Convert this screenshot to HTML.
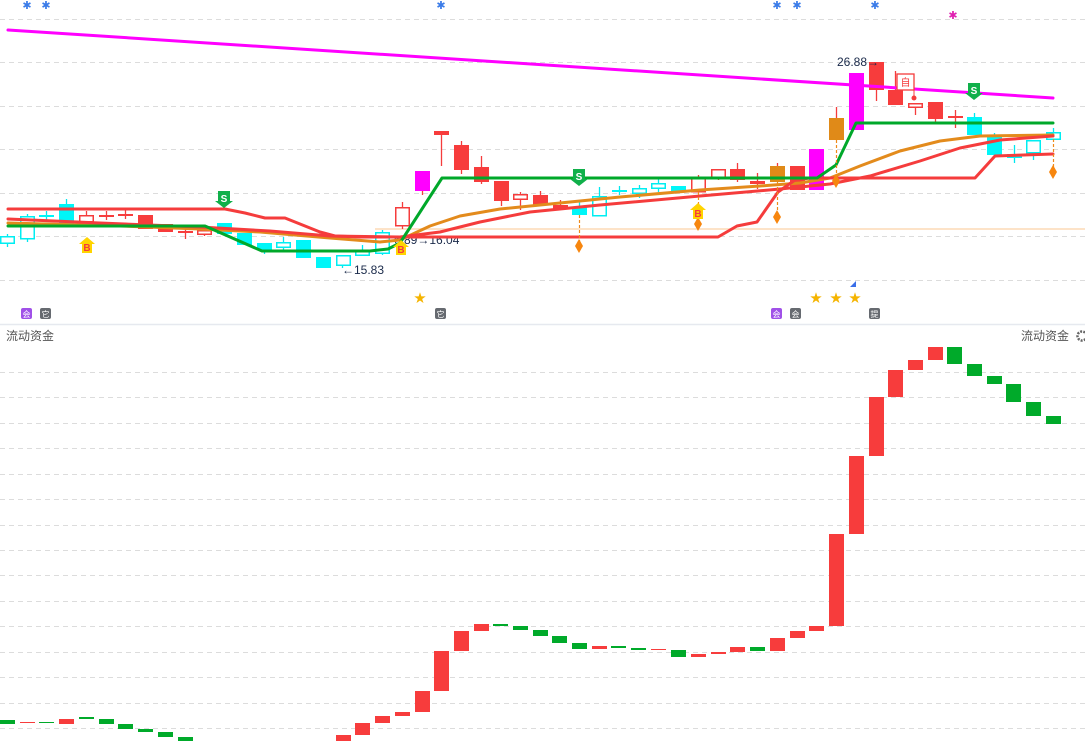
<!DOCTYPE html>
<html><head><meta charset="utf-8"><style>
html,body{margin:0;padding:0;background:#fff;width:1085px;height:741px;overflow:hidden}
svg{display:block}
text{font-family:"Liberation Sans","Noto Sans CJK SC",sans-serif}
</style></head><body>
<svg width="1085" height="741" viewBox="0 0 1085 741" xmlns="http://www.w3.org/2000/svg">
<g stroke="#dcdcdc" stroke-width="1" stroke-dasharray="5,4">
<line x1="0" y1="19.5" x2="1085" y2="19.5"/><line x1="0" y1="62.5" x2="1085" y2="62.5"/><line x1="0" y1="106.5" x2="1085" y2="106.5"/><line x1="0" y1="149.5" x2="1085" y2="149.5"/><line x1="0" y1="193.5" x2="1085" y2="193.5"/><line x1="0" y1="236.5" x2="1085" y2="236.5"/><line x1="0" y1="280.5" x2="1085" y2="280.5"/>
<line x1="0" y1="372.5" x2="1085" y2="372.5"/><line x1="0" y1="397.5" x2="1085" y2="397.5"/><line x1="0" y1="423.5" x2="1085" y2="423.5"/><line x1="0" y1="448.5" x2="1085" y2="448.5"/><line x1="0" y1="474.5" x2="1085" y2="474.5"/><line x1="0" y1="499.5" x2="1085" y2="499.5"/><line x1="0" y1="525.5" x2="1085" y2="525.5"/><line x1="0" y1="550.5" x2="1085" y2="550.5"/><line x1="0" y1="575.5" x2="1085" y2="575.5"/><line x1="0" y1="601.5" x2="1085" y2="601.5"/><line x1="0" y1="626.5" x2="1085" y2="626.5"/><line x1="0" y1="652.5" x2="1085" y2="652.5"/><line x1="0" y1="677.5" x2="1085" y2="677.5"/><line x1="0" y1="703.5" x2="1085" y2="703.5"/><line x1="0" y1="728.5" x2="1085" y2="728.5"/>
</g>
<line x1="0" y1="324.5" x2="1085" y2="324.5" stroke="#e6e9ef" stroke-width="1.5"/>
<line x1="375" y1="229" x2="1085" y2="229" stroke="#fde3c8" stroke-width="2"/>
<text x="394" y="244" font-size="12" fill="#1a2a4a">6.89→16.04</text>

<!-- wicks -->
<g stroke-width="1.3">
<g stroke="#00e8f0">
<line x1="7.5" y1="234" x2="7.5" y2="247"/><line x1="27.5" y1="214" x2="27.5" y2="242"/><line x1="46.5" y1="211" x2="46.5" y2="221"/><line x1="66.5" y1="199" x2="66.5" y2="225"/>
<line x1="264.5" y1="243" x2="264.5" y2="254"/><line x1="283.5" y1="237" x2="283.5" y2="250"/><line x1="342.5" y1="255" x2="342.5" y2="268"/><line x1="362.5" y1="245" x2="362.5" y2="256"/><line x1="382.5" y1="230" x2="382.5" y2="255"/>
<line x1="579.5" y1="200" x2="579.5" y2="215"/><line x1="599.5" y1="187" x2="599.5" y2="216"/><line x1="619.5" y1="186" x2="619.5" y2="195"/><line x1="639.5" y1="185" x2="639.5" y2="198"/><line x1="658.5" y1="178" x2="658.5" y2="192"/>
<line x1="974.5" y1="113" x2="974.5" y2="135"/><line x1="994.5" y1="133" x2="994.5" y2="155"/><line x1="1014.5" y1="145" x2="1014.5" y2="163"/><line x1="1033.5" y1="140" x2="1033.5" y2="160"/><line x1="1053.5" y1="128" x2="1053.5" y2="139"/>
</g>
<g stroke="#f53c3c">
<line x1="86.5" y1="211" x2="86.5" y2="225"/><line x1="106.5" y1="211" x2="106.5" y2="220"/><line x1="125.5" y1="210" x2="125.5" y2="219"/><line x1="185.5" y1="228" x2="185.5" y2="239"/><line x1="204.5" y1="227" x2="204.5" y2="236"/>
<line x1="402.5" y1="202" x2="402.5" y2="229"/><line x1="441.5" y1="131" x2="441.5" y2="166"/><line x1="461.5" y1="141" x2="461.5" y2="174"/><line x1="481.5" y1="156" x2="481.5" y2="184"/><line x1="501.5" y1="181" x2="501.5" y2="206"/><line x1="520.5" y1="192" x2="520.5" y2="210"/><line x1="540.5" y1="191" x2="540.5" y2="205"/><line x1="560.5" y1="200" x2="560.5" y2="209"/>
<line x1="698.5" y1="175" x2="698.5" y2="192"/><line x1="718.5" y1="169" x2="718.5" y2="180"/><line x1="737.5" y1="163" x2="737.5" y2="182"/><line x1="757.5" y1="173" x2="757.5" y2="189"/><line x1="777.5" y1="163" x2="777.5" y2="182"/>
<line x1="876.5" y1="62" x2="876.5" y2="101"/><line x1="895.5" y1="71" x2="895.5" y2="105"/><line x1="915.5" y1="103" x2="915.5" y2="115"/><line x1="935.5" y1="102" x2="935.5" y2="122"/><line x1="955.5" y1="110" x2="955.5" y2="128"/>
<line x1="836.5" y1="107" x2="836.5" y2="140"/><line x1="422.5" y1="171" x2="422.5" y2="195"/>
</g>
</g>
<!-- cyan candles -->
<g fill="#00f6f8">
<rect x="59" y="204" width="15" height="21"/><rect x="217" y="223" width="15" height="11"/><rect x="237" y="233" width="15" height="12"/><rect x="257" y="243" width="15" height="7"/><rect x="296" y="240" width="15" height="18"/><rect x="316" y="257" width="15" height="11"/>
<rect x="39" y="215" width="15" height="2"/><rect x="612" y="190" width="15" height="2"/>
<rect x="572" y="207" width="15" height="8"/><rect x="671" y="186" width="15" height="6"/>
<rect x="967" y="117" width="15" height="18"/><rect x="987" y="135" width="15" height="20"/><rect x="1007" y="154" width="15" height="4"/>
</g>
<g fill="#fff" stroke="#00eef2" stroke-width="1.5">
<rect x="0.75" y="236.75" width="13.5" height="6.5"/><rect x="20.75" y="216.75" width="13.5" height="22"/><rect x="276.75" y="242.75" width="13.5" height="4.5"/><rect x="336.75" y="255.75" width="13.5" height="9.5"/><rect x="355.75" y="250.75" width="13.5" height="4.5"/><rect x="375.75" y="232.75" width="13.5" height="20.5"/>
<rect x="592.75" y="196.75" width="13.5" height="19"/><rect x="632.75" y="188.75" width="13.5" height="4.5"/><rect x="651.75" y="183.75" width="13.5" height="4.5"/>
<rect x="1026.75" y="140.75" width="13.5" height="12"/><rect x="1046.75" y="132.75" width="13.5" height="6.5"/>
</g>
<!-- red candles -->
<g fill="#f73c3c">
<rect x="138" y="215" width="15" height="14"/><rect x="158" y="224" width="15" height="8"/><rect x="99" y="215" width="15" height="2"/><rect x="118" y="214" width="15" height="2"/><rect x="178" y="231" width="15" height="2"/>
<rect x="434" y="131" width="15" height="4"/><rect x="454" y="145" width="15" height="25"/><rect x="474" y="167" width="15" height="15"/><rect x="494" y="181" width="15" height="20"/><rect x="533" y="195" width="15" height="10"/><rect x="553" y="205" width="15" height="4"/>
<rect x="730" y="169" width="15" height="11"/><rect x="750" y="181" width="15" height="3"/><rect x="790" y="166" width="15" height="24"/>
<rect x="869" y="62" width="15" height="28"/><rect x="888" y="90" width="15" height="15"/><rect x="928" y="102" width="15" height="17"/><rect x="948" y="116" width="15" height="2"/>
</g>
<g fill="#fff" stroke="#f53c3c" stroke-width="1.5">
<rect x="79.75" y="215.75" width="13.5" height="6"/><rect x="197.75" y="230.75" width="13.5" height="3.5"/><rect x="395.75" y="207.75" width="13.5" height="18"/><rect x="513.75" y="194.75" width="13.5" height="4.5"/><rect x="691.75" y="177.75" width="13.5" height="14"/><rect x="711.75" y="169.75" width="13.5" height="8"/><rect x="908.75" y="103.75" width="13.5" height="3.5"/>
</g>
<g fill="#ff00ff"><rect x="415" y="171" width="15" height="20"/><rect x="809" y="149" width="15" height="41"/><rect x="849" y="73" width="15" height="57"/></g>
<g fill="#e08a18"><rect x="770" y="166" width="15" height="16"/><rect x="829" y="118" width="15" height="22"/></g>

<!-- lines -->
<g fill="none" stroke-linejoin="round" stroke-linecap="round">
<line x1="8" y1="30" x2="1053" y2="98" stroke="#ff00ff" stroke-width="3"/>
<polyline stroke="#e38b1c" stroke-width="3" points="8,223 120,226 200,229 260,232 330,238 380,242 400,240 430,226 460,216 500,209 560,203 620,197 700,190 760,186 800,183 830,178 860,166 900,151 940,141 980,136 1053,135"/>
<polyline stroke="#f53c3c" stroke-width="3" points="8,219 100,223 200,227 270,231 330,236 400,237 440,232 480,222 530,212 600,205 700,196 780,189 830,184 870,176 920,161 960,148 1000,140 1053,136"/>
<polyline stroke="#f53c3c" stroke-width="3" points="8,209 225,209 245,213 265,218 285,218 320,232 335,236 360,237 718,237 737,226 757,222 778,192 795,180 810,178 975,178 995,156 1053,154"/>
<polyline stroke="#00a82a" stroke-width="3" points="8,226 205,226 262,251 370,251 388,249 400,243 442,178 817,178 836,165 856,123 1053,123"/>
</g>

<!-- dashed orange to diamonds -->
<g stroke="#ef8a1a" stroke-width="1.2" stroke-dasharray="3,2">
<line x1="579.5" y1="215" x2="579.5" y2="242"/><line x1="777.5" y1="182" x2="777.5" y2="213"/><line x1="836.5" y1="140" x2="836.5" y2="177"/><line x1="1053.5" y1="139" x2="1053.5" y2="168"/><line x1="698.5" y1="192" x2="698.5" y2="218"/>
</g>
<g fill="#f7860e">
<polygon points="579,239 583,246 579,253 575,246"/><polygon points="698,217 702,224 698,231 694,224"/><polygon points="777,210 781,217 777,224 773,217"/><polygon points="836,174 840,181 836,188 832,181"/><polygon points="1053,165 1057,172 1053,179 1049,172"/>
</g>

<!-- S markers -->
<g>
<path d="M218,191h12v10h3l-9,7l-9,-7h3z" fill="#10b04a"/><text x="224" y="202" font-size="10" font-weight="bold" fill="#fff" text-anchor="middle">S</text>
<path d="M573,169h12v10h3l-9,7l-9,-7h3z" fill="#10b04a"/><text x="579" y="180" font-size="10" font-weight="bold" fill="#fff" text-anchor="middle">S</text>
<path d="M968,83h12v10h3l-9,7l-9,-7h3z" fill="#10b04a"/><text x="974" y="94" font-size="10" font-weight="bold" fill="#fff" text-anchor="middle">S</text>
</g>
<!-- B markers -->
<g>
<path d="M87,237l8,7h-3v9h-10v-9h-3z" fill="#ffd400"/><text x="87" y="251" font-size="10" font-weight="bold" fill="#f53c3c" text-anchor="middle">B</text>
<path d="M401,240l8,7h-3v8h-10v-8h-3z" fill="#ffd400"/><text x="401" y="253" font-size="10" font-weight="bold" fill="#f53c3c" text-anchor="middle">B</text>
<path d="M698,203l8,7h-3v9h-10v-9h-3z" fill="#ffd400"/><text x="698" y="217" font-size="10" font-weight="bold" fill="#f53c3c" text-anchor="middle">B</text>
</g>
<!-- 自 box -->
<rect x="897" y="74" width="17" height="16" fill="#fff" stroke="#f53c3c" stroke-width="1.3"/>
<text x="905.5" y="86" font-size="10" fill="#f53c3c" text-anchor="middle">自</text>
<line x1="914" y1="90" x2="914" y2="97" stroke="#f53c3c" stroke-width="1"/>
<circle cx="914" cy="98" r="2.5" fill="#f53c3c"/>

<!-- labels -->
<text x="837" y="66" font-size="12" fill="#1a2a4a">26.88→</text>
<text x="342" y="274" font-size="12" fill="#1a2a4a">←15.83</text>

<!-- asterisks -->
<g font-size="11" fill="#3a7be8" text-anchor="middle">
<text x="27" y="9">✱</text><text x="46" y="9">✱</text><text x="441" y="9">✱</text><text x="777" y="9">✱</text><text x="797" y="9">✱</text><text x="875" y="9">✱</text>
</g>
<text x="953" y="19" font-size="11" fill="#e020b0" text-anchor="middle">✱</text>
<!-- stars -->
<g font-size="12" fill="#f5b400" text-anchor="middle">
<text x="420" y="302">★</text><text x="816" y="302">★</text><text x="836" y="302">★</text><text x="855" y="302">★</text>
</g>
<path d="M856,281v6h-6z" fill="#3a6ee8"/>
<!-- icons -->
<g font-size="8" fill="#fff" text-anchor="middle">
<rect x="21" y="308" width="11" height="11" rx="2" fill="#a050e8"/><text x="26.5" y="317">会</text>
<rect x="40" y="308" width="11" height="11" rx="2" fill="#666a70"/><text x="45.5" y="317">它</text>
<rect x="435" y="308" width="11" height="11" rx="2" fill="#666a70"/><text x="440.5" y="317">它</text>
<rect x="771" y="308" width="11" height="11" rx="2" fill="#a050e8"/><text x="776.5" y="317">会</text>
<rect x="790" y="308" width="11" height="11" rx="2" fill="#666a70"/><text x="795.5" y="317">会</text>
<rect x="869" y="308" width="11" height="11" rx="2" fill="#666a70"/><text x="874.5" y="317">提</text>
</g>

<text x="6" y="340" font-size="12" fill="#555">流动资金</text>
<text x="1021" y="340" font-size="12" fill="#555">流动资金</text>
<circle cx="1082" cy="336" r="4.5" fill="none" stroke="#666" stroke-width="2.5" stroke-dasharray="2,1.2"/>

<!-- bottom bars -->
<g fill="#00aa2a">
<rect x="0" y="720" width="15" height="4"/><rect x="39" y="722" width="15" height="1"/><rect x="79" y="717" width="15" height="2"/><rect x="99" y="719" width="15" height="5"/><rect x="118" y="724" width="15" height="5"/><rect x="138" y="729" width="15" height="3"/><rect x="158" y="732" width="15" height="5"/><rect x="178" y="737" width="15" height="4"/>
<rect x="493" y="624" width="15" height="2"/><rect x="513" y="626" width="15" height="4"/><rect x="533" y="630" width="15" height="6"/><rect x="552" y="636" width="15" height="7"/><rect x="572" y="643" width="15" height="6"/><rect x="611" y="646" width="15" height="2"/><rect x="631" y="648" width="15" height="2"/><rect x="671" y="650" width="15" height="7"/><rect x="750" y="647" width="15" height="4"/>
<rect x="947" y="347" width="15" height="17"/><rect x="967" y="364" width="15" height="12"/><rect x="987" y="376" width="15" height="8"/><rect x="1006" y="384" width="15" height="18"/><rect x="1026" y="402" width="15" height="14"/><rect x="1046" y="416" width="15" height="8"/>
</g>
<g fill="#f73c3c">
<rect x="20" y="722" width="15" height="1"/><rect x="59" y="719" width="15" height="5"/>
<rect x="336" y="735" width="15" height="6"/><rect x="355" y="723" width="15" height="12"/><rect x="375" y="716" width="15" height="7"/><rect x="395" y="712" width="15" height="4"/><rect x="415" y="691" width="15" height="21"/><rect x="434" y="651" width="15" height="40"/><rect x="454" y="631" width="15" height="20"/><rect x="474" y="624" width="15" height="7"/>
<rect x="592" y="646" width="15" height="3"/><rect x="651" y="649" width="15" height="1"/><rect x="691" y="654" width="15" height="3"/><rect x="711" y="652" width="15" height="2"/><rect x="730" y="647" width="15" height="5"/><rect x="770" y="638" width="15" height="13"/><rect x="790" y="631" width="15" height="7"/><rect x="809" y="626" width="15" height="5"/>
<rect x="829" y="534" width="15" height="92"/><rect x="849" y="456" width="15" height="78"/><rect x="869" y="397" width="15" height="59"/><rect x="888" y="370" width="15" height="27"/><rect x="908" y="360" width="15" height="10"/><rect x="928" y="347" width="15" height="13"/>
</g>
</svg>
</body></html>
